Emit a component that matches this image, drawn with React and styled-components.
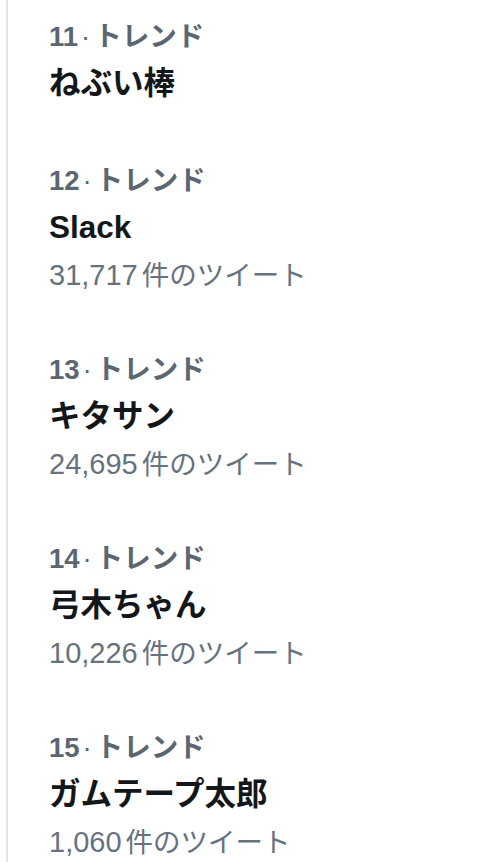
import React from 'react'
import styled, { createGlobalStyle } from 'styled-components'

const GlobalStyle = createGlobalStyle`
  html, body {
    margin: 0;
    padding: 0;
    background: #ffffff;
  }
  body {
    font-family: "Liberation Sans", "Noto Sans CJK JP", sans-serif;
    overflow: hidden;
  }
`

const Page = styled.div`
  width: 482px;
  height: 862px;
  overflow: hidden;
  background: #ffffff;
`

const Column = styled.div`
  margin-left: 6px;
  border-left: 2px solid #e3e5e8;
  padding-left: 41px;
  min-height: 862px;
`

// trends without a tweet count sit a little looser
const Trend = styled.div`
  display: flex;
  flex-direction: column;
  padding: 16px 0 ${(p) => (p.$bare ? '36px' : '32px')};

  &:first-child {
    padding-top: 14px;
  }
`

const Rank = styled.div`
  font-size: 27.5px;
  line-height: 46px;
  font-weight: 700;
  color: #5b6670;
  white-space: nowrap;
`

const Dot = styled.span`
  margin: 0 4px 0 3px;
  font-weight: 400;
`

const Title = styled.div`
  font-size: 31.5px;
  line-height: 46px;
  font-weight: 700;
  color: #14171a;
  white-space: nowrap;
`

const Count = styled.div`
  margin-top: 2px;
  font-size: 27.5px;
  line-height: 46px;
  font-weight: 400;
  color: #66727e;
  white-space: nowrap;
`

const Num = styled.span`
  font-size: 29px;
  margin-right: 4px;
`

const trends = [
  { rank: 11, title: 'ねぶい棒' },
  { rank: 12, title: 'Slack', count: '31,717' },
  { rank: 13, title: 'キタサン', count: '24,695' },
  { rank: 14, title: '弓木ちゃん', count: '10,226' },
  { rank: 15, title: 'ガムテープ太郎', count: '1,060' },
]

export default function App() {
  return (
    <Page>
      <GlobalStyle />
      <Column>
        {trends.map((t) => (
          <Trend key={t.rank} $bare={!t.count}>
            <Rank>
              {t.rank}
              <Dot>·</Dot>
              トレンド
            </Rank>
            <Title>{t.title}</Title>
            {t.count && (
              <Count>
                <Num>{t.count}</Num>件のツイート
              </Count>
            )}
          </Trend>
        ))}
      </Column>
    </Page>
  )
}
